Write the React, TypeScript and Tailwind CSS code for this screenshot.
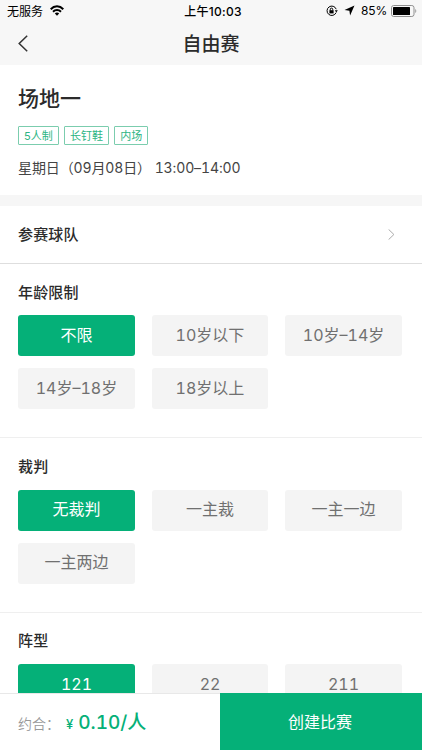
import { useState } from 'react'

interface OptionSectionProps {
  title: string
  options: string[]
}

const ages = ['不限', '10岁以下', '10岁–14岁', '14岁–18岁', '18岁以上']
const referees = ['无裁判', '一主裁', '一主一边', '一主两边']
const formations = ['121', '22', '211']
const tags = ['5人制', '长钉鞋', '内场']

function StatusBar() {
  return (
    <div className="grid h-[21px] grid-cols-[1fr_auto_1fr] items-center pl-[7px] pr-[5px] text-[12px] leading-none text-black">
      <div className="flex items-center gap-[7px]">
        <span className="pt-[2px]">无服务</span>
        <svg width="14" height="11" viewBox="0 0 14 11" fill="none" stroke="currentColor" strokeWidth="2">
          <path d="M.7 4.2C4.3.4 9.7.4 13.3 4.2" />
          <path d="M3 6.7c2.3-2.3 5.7-2.3 8 0" />
          <path d="M4.8 8.5C6 7.3 8 7.3 9.2 8.5L7 10.8Z" fill="currentColor" stroke="none" />
        </svg>
      </div>
      <span className="pl-[2px] pt-[2px] font-medium tracking-[0.3px]">上午10:03</span>
      <div className="flex items-center justify-end">
        <svg width="12" height="12" viewBox="0 0 12 12" fill="none" stroke="currentColor">
          <path d="M10.1 7.6A4.7 4.7 0 1 1 10.2 4.2" />
          <path d="M8.8 5.3h3L10.3 7.5Z" fill="currentColor" stroke="none" />
          <rect x="3.4" y="5.2" width="4.2" height="3.2" fill="currentColor" stroke="none" />
          <path d="M4.3 5.4V4.3a1.2 1.2 0 0 1 2.4 0v1.1" />
        </svg>
        <svg className="ml-[6px]" width="11" height="11" viewBox="0 0 11 11" fill="currentColor">
          <path d="M10.5.5 6.1 10.5 5.4 5.7.5 5Z" />
        </svg>
        <span className="ml-[6px] pt-px tracking-[-0.2px]">85%</span>
        <svg className="ml-[4px]" width="26" height="12" viewBox="0 0 26 12" fill="none">
          <rect x=".5" y=".5" width="22.5" height="11" rx="2.2" stroke="#8f8f8f" />
          <rect x="2" y="2" width="17" height="8" rx=".6" fill="#000" />
          <path d="M24.3 4v4c1.3-.6 1.3-3.4 0-4Z" fill="#8f8f8f" />
        </svg>
      </div>
    </div>
  )
}

function OptionSection({ title, options }: OptionSectionProps) {
  const [selected, setSelected] = useState(options[0])

  return (
    <section className="border-b border-[#efefef] px-[18px] pb-[28.1px] pt-[16.6px]">
      <h2 className="text-[15px] font-medium leading-[24px] tracking-[0.15px] text-[#2b2b2b]">{title}</h2>
      <div className="mt-[10.7px] grid grid-cols-3 gap-x-[16.6px] gap-y-[12px] pr-[2px]">
        {options.map((option) => (
          <button
            key={option}
            onClick={() => setSelected(option)}
            className={`h-[41px] rounded-[3px] pb-[2px] text-[16px] tabular-nums ${
              option === selected ? 'bg-[#05b078] text-white' : 'bg-[#f4f4f4] text-[#707070]'
            }`}
          >
            {option}
          </button>
        ))}
      </div>
    </section>
  )
}

export default function App() {
  return (
    <div className="flex h-[750px] w-[422px] flex-col overflow-hidden bg-white font-['Inter','Noto_Sans_CJK_SC',sans-serif] text-[#2b2b2b]">
      <header className="h-[65px] shrink-0 bg-[#f7f7f7]">
        <StatusBar />
        <div className="grid h-[44px] grid-cols-[1fr_auto_1fr] items-center">
          <button className="pl-[18px]">
            <svg width="10" height="17" viewBox="0 0 10 17" fill="none" stroke="#333" strokeWidth="1.5">
              <path d="M9.2.7 1.2 8.5l8 7.8" />
            </svg>
          </button>
          <h1 className="pt-[4px] text-[19px] font-medium">自由赛</h1>
        </div>
      </header>

      <main className="min-h-0 flex-1 overflow-hidden">
        <section className="h-[130px] px-[18px] pt-[19px]">
          <h2 className="text-[21px] font-medium leading-[30px]">场地一</h2>
          <div className="mt-[12px] flex gap-[5.3px]">
            {tags.map((tag) => (
              <span
                key={tag}
                className="flex h-[19px] items-center rounded-[1px] border border-[#7bcdae] px-[5px] pt-px text-[11px] leading-none text-[#2db584]"
              >
                {tag}
              </span>
            ))}
          </div>
          <p className="mt-[12px] whitespace-pre text-[14px] leading-[22px] tabular-nums tracking-[-0.12px] text-[#444]">
            星期日（09月08日） 13:00–14:00
          </p>
        </section>

        <div className="h-[11px] bg-[#f6f6f6]" />

        <button className="flex h-[58px] w-full items-center justify-between border-b border-[#dedede] pl-[18px] pr-[27px]">
          <span className="pt-[2px] text-[15px] font-medium tracking-[0.15px]">参赛球队</span>
          <svg width="7" height="11" viewBox="0 0 7 11" fill="none" stroke="#aaa">
            <path d="m.6.4 5.3 5.1L.6 10.6" />
          </svg>
        </button>

        <OptionSection title="年龄限制" options={ages} />
        <OptionSection title="裁判" options={referees} />
        <OptionSection title="阵型" options={formations} />
      </main>

      <footer className="flex h-[57px] shrink-0">
        <div className="flex flex-1 items-baseline border-t border-[#e8e8e8] pl-[18px] pt-[15px] text-[#05b078]">
          <span className="text-[14px] font-[350] text-[#999]">约合：</span>
          <span className="ml-[6px] text-[13px] font-medium">¥</span>
          <span className="ml-[5px] text-[19px] font-medium tabular-nums">0.10/人</span>
        </div>
        <button className="w-[202px] bg-[#05b078] pr-[2px] text-[16px] text-white">创建比赛</button>
      </footer>
    </div>
  )
}
